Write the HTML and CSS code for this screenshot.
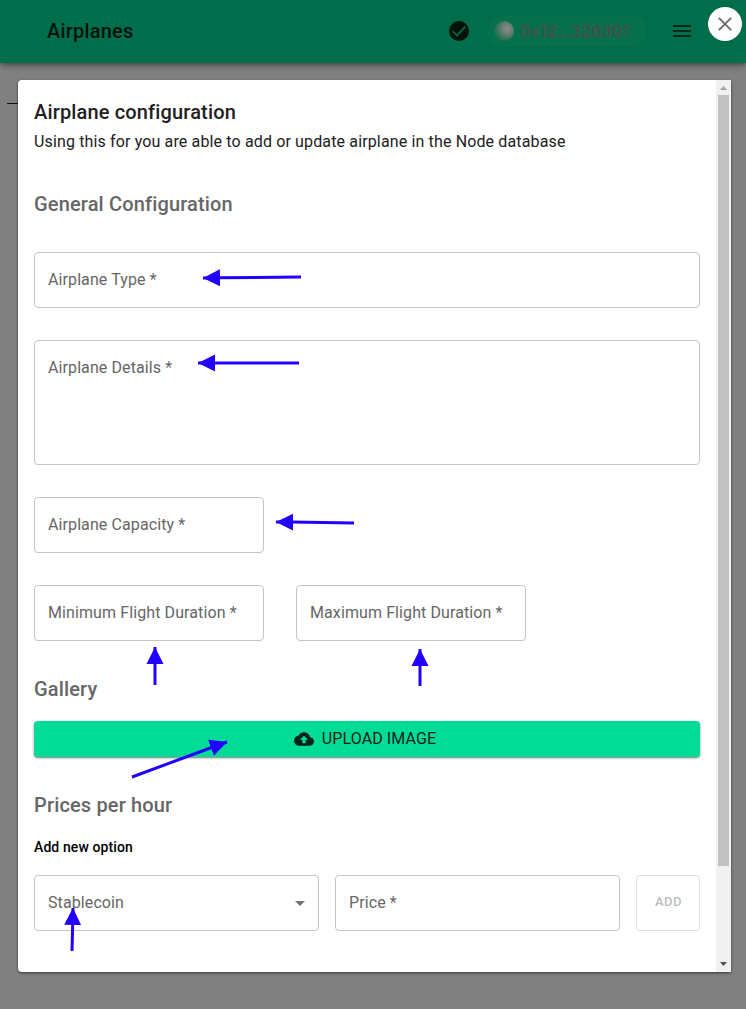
FILE: index.html
```html
<!DOCTYPE html>
<html lang="en">
<head>
<meta charset="utf-8">
<title>Airplanes</title>
<link rel="stylesheet" href="styles.css">
</head>
<body>
<div class="page">
  <header class="appbar">
    <h1 class="appbar-title">Airplanes</h1>
    <svg class="check" viewBox="0 0 20 20"><circle cx="10" cy="10" r="10" fill="#02120d"/><path d="M3.7 10.2l4.3 4.3 8.2-8.9" fill="none" stroke="#006e4a" stroke-width="1.6"/></svg>
    <div class="wallet"><span class="avatar"></span><span class="address">0x12...326301</span></div>
    <svg class="menu" viewBox="0 0 18 12"><path d="M0 1h18M0 6h18M0 11h18" stroke="#04291d" stroke-width="2"/></svg>
    <button class="close" aria-label="Close"><svg viewBox="0 0 14 14"><path d="M.8.8l12.4 12.4M13.2.8L.8 13.2" stroke="#6b6b6b" stroke-width="1.9"/></svg></button>
  </header>
  <div class="rule"></div>
  <main class="dialog">
    <div class="content">
      <h2 class="title">Airplane configuration</h2>
      <p class="intro">Using this for you are able to add or update airplane in the Node database</p>
      <h3 class="section">General Configuration</h3>
      <div class="field type">Airplane Type *</div>
      <div class="field details">Airplane Details *</div>
      <div class="row"><div class="field short">Airplane Capacity *</div></div>
      <div class="row"><div class="field short">Minimum Flight Duration *</div><div class="field short">Maximum Flight Duration *</div></div>
      <h3 class="section">Gallery</h3>
      <button class="upload"><svg viewBox="0 0 24 24"><path fill="currentColor" d="M19.35 10.04C18.67 6.59 15.64 4 12 4 9.11 4 6.6 5.64 5.35 8.04 2.34 8.36 0 10.91 0 14c0 3.31 2.69 6 6 6h13c2.76 0 5-2.24 5-5 0-2.64-2.05-4.78-4.65-4.96zM14 13v4h-4v-4H7l5-5 5 5h-3z"/></svg><span>UPLOAD IMAGE</span></button>
      <h3 class="section">Prices per hour</h3>
      <h4 class="option">Add new option</h4>
      <div class="prices">
        <div class="field select"><span>Stablecoin</span><svg viewBox="0 0 10 5"><path d="M0 0h10L5 5z" fill="#757575"/></svg></div>
        <div class="field price">Price *</div>
        <button class="add" disabled>ADD</button>
      </div>
    </div>
    <div class="scrollbar">
      <svg class="up" viewBox="0 0 7 4"><path d="M0 4h7L3.5 0z" fill="#a3a3a3"/></svg>
      <div class="thumb"></div>
      <svg class="down" viewBox="0 0 7 4"><path d="M0 0h7L3.5 4z" fill="#505050"/></svg>
    </div>
  </main>
  <svg class="arrows" viewBox="0 0 746 1009">
    <defs><marker id="head" viewBox="0 0 17 18" refX="17" refY="9" markerWidth="17" markerHeight="18" markerUnits="userSpaceOnUse" orient="auto"><path d="M0 .5L17 9 0 17.5z" fill="#2200ff"/></marker></defs>
    <g class="shafts">
      <path d="M301 277L218 277.8 203 278"/>
      <path d="M299 363H213 198"/>
      <path d="M354 523L291 522.1 276 522"/>
      <path d="M155 685V662 647"/>
      <path d="M420 686V664 649"/>
      <path d="M132 777L213 747 227 742"/>
      <path d="M72 951L72.7 923 73 908"/>
    </g>
  </svg>
</div>
</body>
</html>
```
FILE: styles.css
```css
* { box-sizing: border-box; }
body { margin: 0; font-family: Roboto, sans-serif; font-size: 16px; color: #212121; }
h1, h2, h3, h4, p { margin: 0; }
button { font-family: inherit; padding: 0; border: 0; }
svg { display: block; }
.page { position: relative; width: 746px; height: 1009px; background: #808080; overflow: hidden; }

.appbar { height: 63px; display: flex; align-items: center; padding: 0 0 1px 47px; background: #006e4a; box-shadow: 0 2px 4px -1px rgba(0,0,0,.3), 0 4px 5px rgba(0,0,0,.14), 0 1px 10px rgba(0,0,0,.12); }
.appbar-title { width: 402px; font-size: 20px; font-weight: 500; line-height: 32px; letter-spacing: .19px; color: #02120d; }
.check { width: 20px; height: 20px; }
.wallet { width: 160px; height: 30px; margin-left: 18px; padding-left: 6px; display: flex; align-items: center; gap: 6px; border: 1px solid #0b704e; border-radius: 15px; background: #066f4c; }
.avatar { width: 20px; height: 20px; border-radius: 50%; background: radial-gradient(circle at 65% 40%, #898989 0, #6f8179 25%, #2d7458 60%, #006e4a 90%); }
.address { font-family: Inter, sans-serif; font-size: 16px; font-weight: 600; letter-spacing: 0; color: #484f4b; }
.menu { width: 18px; height: 12px; margin-left: 26px; }
.close { width: 34px; height: 34px; margin: -14px 0 0 17px; flex: none; display: grid; place-items: center; border-radius: 50%; background: #fff; }
.close svg { width: 14px; height: 14px; }

.rule { position: absolute; left: 7px; top: 103px; width: 20px; height: 1px; background: #101010; }
.dialog { position: relative; width: 713px; height: 892px; margin: 17px 0 0 18px; display: flex; background: #fff; border-radius: 4px 0 0 4px; overflow: hidden; box-shadow: 0 1px 3px rgba(0,0,0,.6); }
.content { width: 698px; padding: 16px 16px 0; }
.title, .section { font-size: 20px; font-weight: 500; line-height: 32px; letter-spacing: .15px; }
.section { color: #666; }
.intro { margin: 2px 0 34px; line-height: 24px; letter-spacing: .14px; }
.field { height: 56px; padding: 0 13px; border: 1px solid #c4c4c4; border-radius: 4px; line-height: 53px; letter-spacing: .1px; color: #666; white-space: nowrap; }
.type { margin: 32px 0; }
.details { height: 125px; margin-bottom: 32px; }
.row { display: flex; gap: 32px; margin-bottom: 32px; }
.short { width: 230px; }
.upload { width: 666px; height: 36px; margin: 16px 0 32px; display: flex; align-items: center; justify-content: center; gap: 8px; padding-right: 4px; border-radius: 4px; background: #00dc96; color: #02221a; font-size: 16px; letter-spacing: .1px; box-shadow: 0 1px 3px rgba(0,0,0,.35), 0 1px 1px rgba(0,0,0,.25); }
.upload svg { width: 20px; height: 20px; }
.upload span { line-height: 34px; }
.option { margin: 15px 0 17px; font-size: 14px; font-weight: 500; line-height: 22px; letter-spacing: .1px; color: #000; }
.prices { display: flex; gap: 16px; }
.select, .price { width: 285px; }
.select { display: flex; justify-content: space-between; align-items: center; }
.select span { align-self: flex-start; }
.select svg { width: 10px; height: 5px; }
.add { width: 64px; height: 56px; padding: 0 0 2px 1px; border: 1px solid #e0e0e0; border-radius: 4px; background: #fff; color: #bdbdbd; font-size: 13px; font-weight: 500; letter-spacing: .46px; line-height: 52px; }

.scrollbar { width: 15px; display: flex; flex-direction: column; align-items: center; background: #f1f1f1; }
.up { width: 7px; height: 4px; margin: 6px 0 5px; }
.thumb { width: 11px; height: 771px; background: #c1c1c1; }
.down { width: 7px; height: 4px; margin: auto 0 6px; }

/* Annotation layer drawn over the form */
.arrows { position: absolute; left: 0; top: 0; width: 746px; height: 1009px; pointer-events: none; }
.shafts path { fill: none; stroke: #2200ff; stroke-width: 3; marker-end: url(#head); }
```
